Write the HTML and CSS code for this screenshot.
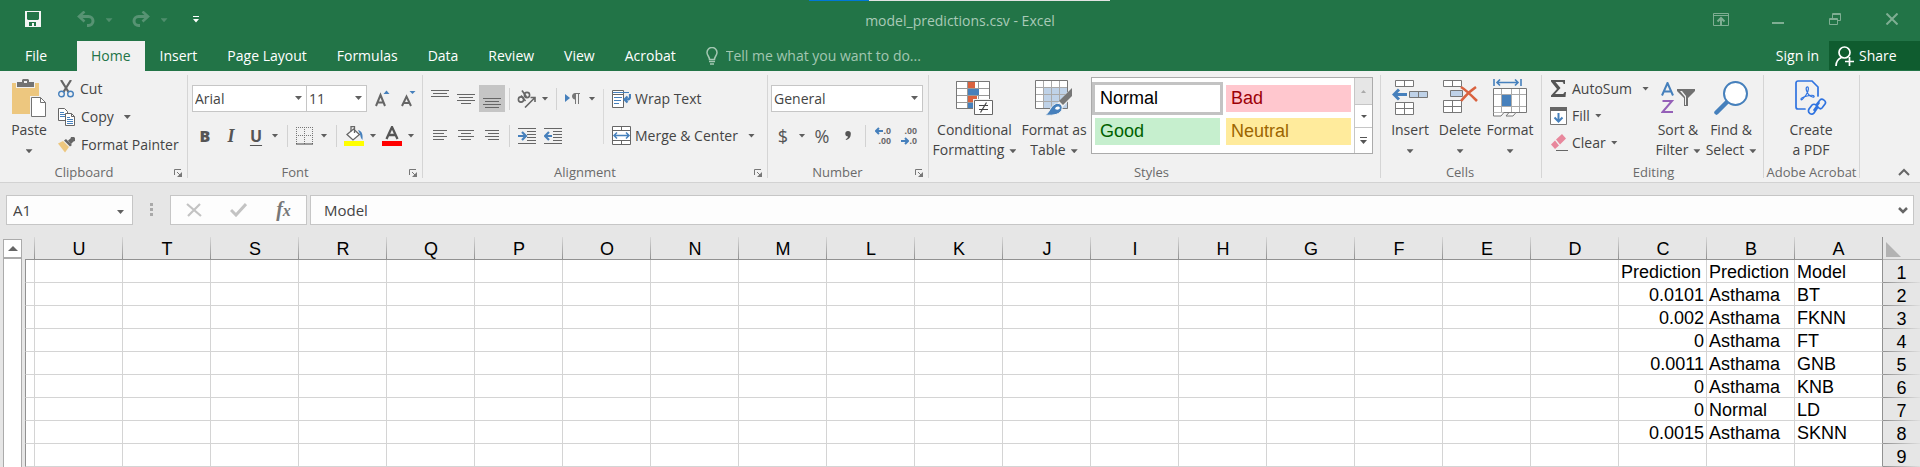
FILE: index.html
```html
<!DOCTYPE html>
<html lang="en">
<head>
<meta charset="utf-8">
<title>model_predictions.csv - Excel</title>
<link rel="stylesheet" href="styles.css">
</head>
<body>
<header class="top">
  <div class="notch"></div>
  <div class="titlebar">
    <div class="quick">
      <button class="quick-btn" aria-label="Save"><svg width="16" height="16" viewBox="0 0 16 16"><path fill="#f5f5f5" fill-rule="evenodd" d="M0 0h16v16H0zM2 1v7l1 1h10l1-1V1zM4 11v4h3v-3h2v3h2v-4z"/></svg></button>
      <button class="quick-btn" aria-label="Undo"><svg class="faded" width="18" height="16" viewBox="0 0 18 16"><path fill="none" stroke="currentColor" stroke-width="3" d="M2 5.500h9.500a4.500 4.500 0 0 1 0 9H10"/><path fill="none" stroke="currentColor" stroke-width="2.600" d="M7.500 0.500 2 5.500l5.500 5"/></svg></button>
      <button class="quick-caret faded" aria-label="Undo list"><i class="caret"></i></button>
      <button class="quick-btn" aria-label="Redo"><svg class="faded" width="18" height="16" viewBox="0 0 18 16"><path fill="none" stroke="currentColor" stroke-width="3" d="M16 5.500H6.500a4.500 4.500 0 0 0 0 9H8"/><path fill="none" stroke="currentColor" stroke-width="2.600" d="M10.500 0.500 16 5.500l-5.500 5"/></svg></button>
      <button class="quick-caret faded" aria-label="Redo list"><i class="caret"></i></button>
      <button class="quick-btn" aria-label="Customize toolbar"><svg width="6" height="7" viewBox="0 0 6 7"><path fill="#fff" d="M0 0h6v1H0zM0 3h6L3 6.500z"/></svg></button>
    </div>
    <h1 class="title">model_predictions.csv - Excel</h1>
    <div class="window-btns">
      <button aria-label="Ribbon display options"><svg width="16" height="13" viewBox="0 0 16 13" fill="none" stroke="currentColor"><path d="M.5.5h15v12H.5zM.5 2.500h15"/><path stroke-width="2" d="M8 12V6M4.500 8.500 8 5l3.500 3.500"/></svg></button>
      <button aria-label="Minimize"><svg width="12" height="14" viewBox="0 0 12 14"><path fill="currentColor" d="M0 10h12v2H0z"/></svg></button>
      <button aria-label="Restore"><svg width="12" height="12" viewBox="0 0 12 12" fill="none" stroke="currentColor"><path d="M.5 5.500h8v6h-8zM.5 6.500h8M3.500 5V.5h8v7H9M3.500 1.500h8"/></svg></button>
      <button aria-label="Close"><svg width="12" height="12" viewBox="0 0 12 12" fill="none" stroke="currentColor" stroke-width="2"><path d="M.5.5l11 11M11.500.5l-11 11"/></svg></button>
    </div>
  </div>
  <nav class="tabs">
    <a class="tab tab-file" href="#">File</a>
    <a class="tab tab-on" href="#" aria-current="page">Home</a>
    <a class="tab" href="#">Insert</a>
    <a class="tab" href="#">Page Layout</a>
    <a class="tab" href="#">Formulas</a>
    <a class="tab" href="#">Data</a>
    <a class="tab" href="#">Review</a>
    <a class="tab" href="#">View</a>
    <a class="tab" href="#">Acrobat</a>
    <label class="tell">
      <svg width="12" height="18" viewBox="0 0 12 18" fill="none" stroke="#a3c7b2"><path stroke-width="1.500" d="M3.500 12.500C3.500 9.500 1 8.500 1 5.500a5 5 0 0 1 10 0c0 3-2.500 4-2.500 7z"/><path stroke-width="1.600" d="M3 14.500h6M4 17h4"/></svg>
      <input type="text" placeholder="Tell me what you want to do..." aria-label="Tell me what you want to do">
    </label>
    <a class="signin" href="#">Sign in</a>
    <button class="share"><svg width="20" height="20" viewBox="0 0 20 20" fill="none" stroke="#fff" stroke-width="1.700"><circle cx="9.500" cy="6.500" r="5.500"/><path d="M1 20c0-4.500 2-7 5.500-8.500M14.500 11v9M10 15.500h9"/></svg>Share</button>
  </nav>
</header>

<main>
<section class="ribbon" aria-label="Home ribbon">
  <div class="group g-clip">
    <div class="body">
      <button class="big">
        <span class="pic"><svg width="35" height="38" viewBox="0 0 35 38"><path fill="#edc77f" d="M0 4h27v31H0z"/><path fill="#f1f1f1" d="M4 3h19v6H4z"/><path fill="#737373" d="M5 3h5V1l1-1h5l1 1v2h5v5H5z"/><path fill="#f1f1f1" d="M12 2h3v2h-3zM18 17h17v21H18z"/><path fill="#fff" stroke="#737373" d="M19.500 18.500h9l5 5v14h-14z"/><path fill="none" stroke="#737373" d="M28.500 18.500v5h5"/></svg></span>
        <span>Paste</span><span><i class="caret"></i></span>
      </button>
      <div class="list list-28">
        <button class="item"><svg width="16" height="18" viewBox="0 0 16 18" fill="none"><path stroke="#666" stroke-width="2.200" d="M3 0l7.500 12M13 0 5.500 12"/><circle cx="3.500" cy="14" r="2.800" stroke="#4680bc" stroke-width="1.400"/><circle cx="12.500" cy="14" r="2.800" stroke="#4680bc" stroke-width="1.400"/></svg>Cut</button>
        <button class="item"><svg width="17" height="18" viewBox="0 0 17 18"><path fill="#fff" stroke="#666" d="M.5.5h6l3 3v9h-9z"/><path stroke="#4680bc" d="M2 4.500h4M2 6.500h5M2 8.500h5"/><path fill="#fff" stroke="#666" d="M7.500 5.500h6l3 3v9h-9z"/><path fill="none" stroke="#666" d="M13.500 5.500v3h3"/><path stroke="#4680bc" d="M9 9.500h3M9 11.500h6M9 13.500h6M9 15.500h6"/></svg>Copy<i class="caret far"></i></button>
        <button class="item"><svg width="17" height="16" viewBox="0 0 17 16"><path fill="#edc77f" d="M0 6.500 5 4l6 6-4 5.500z"/><path fill="#666" d="M6 3.500 8 2l6 6-2 1.500zM10 3.500 12.500 1.500 13 0h3l1 1v3l-1.500.5L13 7z"/></svg>Format Painter</button>
      </div>
    </div>
    <div class="caption"><span>Clipboard</span><button class="launch" aria-label="Clipboard settings"><svg width="8" height="8" viewBox="0 0 8 8"><path fill="none" stroke="#777" d="M.5 6V.5H7M3 3l3 3"/><path fill="#777" d="M8 3v5H3z"/></svg></button></div>
  </div>

  <div class="group g-font">
    <div class="body rows">
      <div class="row">
        <span class="combo c-font"><select aria-label="Font"><option>Arial</option></select><i class="caret"></i></span><span class="combo c-size"><select aria-label="Font size"><option>11</option></select><i class="caret"></i></span>
        <button class="btn indent" aria-label="Increase font size"><svg width="15" height="17" viewBox="0 0 15 17"><path fill="none" stroke="#666" stroke-width="2" d="M1 16 5.500 5 10 16M2.500 12.500h6"/><path fill="#4680bc" d="M8.500 4 11.500.5l3 3.500z"/></svg></button>
        <button class="btn" aria-label="Decrease font size"><svg width="15" height="17" viewBox="0 0 15 17"><path fill="none" stroke="#666" stroke-width="2" d="M1 16 5.500 6.500 10 16M2.500 13h6"/><path fill="#4680bc" d="M8.500 1h6L11.500 4z"/></svg></button>
      </div>
      <div class="row row-font">
        <button class="btn glyph" aria-label="Bold"><b>B</b></button><button class="btn glyph glyph-i" aria-label="Italic"><i>I</i></button><button class="btn duo glyph glyph-u" aria-label="Underline">U</button><button class="drop" aria-label="Underline styles"><i class="caret"></i></button>
        <span class="sep"></span>
        <button class="btn duo" aria-label="Borders"><svg width="18" height="18" viewBox="0 0 18 18"><path fill="none" stroke="#777" stroke-dasharray="1 1" d="M0 .5h17M0 8.500h17M.5 0v17M8.500 0v17M16.500 0v17"/><path stroke="#444" d="M0 17h17"/></svg></button><button class="drop" aria-label="Border styles"><i class="caret"></i></button>
        <span class="sep"></span>
        <button class="btn duo" aria-label="Fill color"><svg width="20" height="20" viewBox="0 0 20 20"><path fill="#fff" stroke="#666" stroke-width="1.300" d="M3 8.500 9.500 3l6 5.500-6.500 5.500z"/><path fill="none" stroke="#666" stroke-width="1.300" d="M7 5.500V.7h3.500V7"/><path fill="#4680bc" d="M14 4c4 1 5 4 4.500 10-2-2-2-4-2.500-6z"/><path fill="#ff0" d="M0 15h20v5H0z"/></svg></button><button class="drop" aria-label="Fill colors"><i class="caret"></i></button><button class="btn duo" aria-label="Font color"><svg width="20" height="20" viewBox="0 0 20 20"><path fill="none" stroke="#555" stroke-width="2.300" d="M4.500 13 10 1l5.500 12M6.500 9h7"/><path fill="red" d="M0 15h20v5H0z"/></svg></button><button class="drop" aria-label="Font colors"><i class="caret"></i></button>
      </div>
    </div>
    <div class="caption"><span>Font</span><button class="launch" aria-label="Font settings"><svg width="8" height="8" viewBox="0 0 8 8"><path fill="none" stroke="#777" d="M.5 6V.5H7M3 3l3 3"/><path fill="#777" d="M8 3v5H3z"/></svg></button></div>
  </div>

  <div class="group g-align">
    <div class="body">
      <div class="rows">
        <div class="row">
          <button class="btn" aria-label="Top align"><svg width="18" height="18" viewBox="0 0 18 18"><path stroke="#666" d="M0 .5h18M2 3.500h14M0 6.500h18"/></svg></button><button class="btn" aria-label="Middle align"><svg width="18" height="18" viewBox="0 0 18 18"><path stroke="#666" d="M0 4.500h18M2 7.500h14M0 10.500h18M4 13.500h10"/></svg></button><button class="btn pressed" aria-label="Bottom align" aria-pressed="true"><svg width="18" height="18" viewBox="0 0 18 18"><path stroke="#666" d="M0 8.500h18M2 11.500h14M0 14.500h18M2 17.500h14"/></svg></button>
          <span class="sep"></span>
          <button class="btn duo" aria-label="Orientation"><svg width="19" height="18" viewBox="0 0 19 18" fill="none" stroke="#666" stroke-width="1.600"><path d="M8 17.500 17.500 8M13.500 7.500H18V12"/><circle cx="4" cy="9.500" r="2.600"/><path d="M4 5.500 8.500 11"/><circle cx="10" cy="5" r="2.600"/><path d="M5 .5 9.500 7"/></svg></button><button class="drop" aria-label="Orientations"><i class="caret"></i></button>
          <span class="sep"></span>
          <button class="btn duo" aria-label="Text direction"><svg width="16" height="12" viewBox="0 0 16 12"><path fill="#4680bc" d="M0 1v8l5-4z"/><path fill="#777" d="M15 0v1h-1v10h-1V1h-2v10h-1V6.500C8.500 6.500 7 5 7 3.200S8.500 0 10 0z"/></svg></button><button class="drop" aria-label="Text directions"><i class="caret"></i></button>
        </div>
        <div class="row">
          <button class="btn" aria-label="Align left"><svg width="14" height="12" viewBox="0 0 14 12"><path stroke="#666" d="M0 .5h14M0 3.500h11M0 6.500h14M0 9.500h11"/></svg></button><button class="btn" aria-label="Center"><svg width="16" height="12" viewBox="0 0 16 12"><path stroke="#666" d="M0 .5h16M3 3.500h10M0 6.500h16M3 9.500h10"/></svg></button><button class="btn" aria-label="Align right"><svg width="14" height="12" viewBox="0 0 14 12"><path stroke="#666" d="M0 .5h14M3 3.500h11M0 6.500h14M3 9.500h11"/></svg></button>
          <span class="sep"></span>
          <button class="btn" aria-label="Increase indent"><svg width="18" height="16" viewBox="0 0 18 16"><path stroke="#666" d="M0 .5h18M9 3.500h9M9 6.500h9M9 9.500h9M9 12.500h9M0 15.500h18"/><path fill="none" stroke="#4680bc" stroke-width="2.200" d="M0 8h7M4 4l4 4-4 4"/></svg></button><button class="btn" aria-label="Decrease indent"><svg width="18" height="16" viewBox="0 0 18 16"><path stroke="#666" d="M0 .5h18M9 3.500h9M9 6.500h9M9 9.500h9M9 12.500h9M0 15.500h18"/><path fill="none" stroke="#4680bc" stroke-width="2.200" d="M8 8H1M5 4 1 8l4 4"/></svg></button>
        </div>
      </div>
      <span class="divider"></span>
      <div class="rows wide">
        <button class="item row"><svg width="19" height="18" viewBox="0 0 19 18"><path fill="#fff" stroke="#666" d="M.5.5h11v4H.5zM.5 4.500h11v13H.5z"/><path stroke="#4680bc" stroke-width="1.200" d="M1 2.500h16M2 7.500h8M2 10.500h7M2 13.500h5"/><path fill="none" stroke="#4680bc" stroke-width="2.200" d="M18 4v3c0 2-1 2.500-3 2.500h-2M15.500 6.500l-3 3 3 3"/></svg>Wrap Text</button>
        <button class="item row"><svg width="19" height="19" viewBox="0 0 19 19"><path fill="#fff" stroke="#666" d="M.5.5h18v18H.5zM.5 4.500h18M.5 14.500h18M9.500 0v4M9.500 15v4"/><path fill="none" stroke="#4680bc" stroke-width="1.500" d="M2.500 9.500h14M5 6.500l-3 3 3 3M14 6.500l3 3-3 3"/></svg>Merge &amp; Center<i class="caret far"></i></button>
      </div>
    </div>
    <div class="caption"><span>Alignment</span><button class="launch" aria-label="Alignment settings"><svg width="8" height="8" viewBox="0 0 8 8"><path fill="none" stroke="#777" d="M.5 6V.5H7M3 3l3 3"/><path fill="#777" d="M8 3v5H3z"/></svg></button></div>
  </div>

  <div class="group g-num">
    <div class="body rows">
      <div class="row"><span class="combo c-num"><select aria-label="Number format"><option>General</option></select><i class="caret"></i></span></div>
      <div class="row">
        <button class="btn duo glyph money" aria-label="Accounting format">$</button><button class="drop" aria-label="Currencies"><i class="caret"></i></button><button class="btn glyph money" aria-label="Percent style">%</button><button class="btn" aria-label="Comma style"><svg width="6" height="9" viewBox="0 0 6 9"><path fill="#555" d="M3 0a2.800 2.800 0 0 1 2.800 3C5.800 6 4 8.500 1 9l-.3-1C2 7.500 3 6.500 3 5.400A2.700 2.700 0 0 1 3 0z"/></svg></button>
        <span class="sep"></span>
        <button class="btn dec" aria-label="Increase decimal"><span><svg width="8" height="8" viewBox="0 0 8 8"><path fill="none" stroke="#4680bc" stroke-width="2" d="M8 4H1M4 1 1 4l3 3"/></svg>.0</span><span>.00</span></button><button class="btn dec" aria-label="Decrease decimal"><span>.00</span><span><svg width="8" height="8" viewBox="0 0 8 8"><path fill="none" stroke="#4680bc" stroke-width="2" d="M0 4h7M4 1l3 3-3 3"/></svg>.0</span></button>
      </div>
    </div>
    <div class="caption"><span>Number</span><button class="launch" aria-label="Number settings"><svg width="8" height="8" viewBox="0 0 8 8"><path fill="none" stroke="#777" d="M.5 6V.5H7M3 3l3 3"/><path fill="#777" d="M8 3v5H3z"/></svg></button></div>
  </div>

  <div class="group g-styles">
    <div class="body">
      <button class="big b-cond">
        <span class="pic"><svg width="38" height="36" viewBox="0 0 38 36"><path fill="#fff" stroke="#999" d="M.5 1.500h33v27H.5zM0 8.500h34M0 15.500h34M0 22.500h34M11.500 1v27M22.500 1v27"/><path fill="none" stroke="#777" d="M.5 1.500h33v27H.5z"/><path fill="#d9623f" d="M12 2h7v6h-7zM12 16h9v6h-9z"/><path fill="#4680bc" d="M12 9h11v6H12zM12 23h5v5h-5z"/><path fill="#f1f1f1" d="M17 19h21v17H17z"/><path fill="#fff" stroke="#666" d="M18.500 20.500h18v14h-18z"/><path fill="none" stroke="#444" stroke-width="1.200" d="M23 25.500h9M23 29.500h9M30.500 22.500l-6 10"/></svg></span>
        <span>Conditional</span><span>Formatting<i class="caret near"></i></span>
      </button>
      <button class="big b-table">
        <span class="pic"><svg width="38" height="36" viewBox="0 0 38 36"><path fill="#fff" d="M.5.5h32v28H.5z"/><path fill="#bfd2e8" d="M9 8h24v21H9z"/><path fill="none" stroke="#aaa" d="M0 7.500h33M0 14.500h33M0 21.500h33M8.500 0v28M16.500 0v28M24.500 0v28"/><path fill="none" stroke="#777" d="M.5.5h32v28H.5z"/><path fill="#f1f1f1" d="M38 6 22 24l4 5 12-13z"/><path fill="#777" d="M37 8v8l-9 9-4-4z"/><path fill="#4680bc" stroke="#f1f1f1" d="M20 24c4-2 8 1 7 5-1 5-8 7-17 6 5-2 5-9 10-11z"/><path fill="#fff" d="M20 29c1-3 4-3 5-1-1 2-3 2-5 1z"/></svg></span>
        <span>Format as</span><span>Table<i class="caret near"></i></span>
      </button>
      <div class="gallery">
        <div class="tiles">
          <button class="tile t-normal">Normal</button><button class="tile t-bad">Bad</button><button class="tile t-good">Good</button><button class="tile t-neutral">Neutral</button>
        </div>
        <div class="scroller">
          <button class="off" aria-label="Scroll up" disabled><svg width="5" height="3" viewBox="0 0 5 3"><path fill="#aaa" d="M0 3 2.500 0 5 3z"/></svg></button>
          <button aria-label="Scroll down"><svg width="6" height="3" viewBox="0 0 6 3"><path fill="#555" d="M0 0h6L3 3z"/></svg></button>
          <button aria-label="More styles"><svg width="7" height="7" viewBox="0 0 7 7"><path fill="#555" d="M0 0h7v1H0zM0 3h7L3.500 7z"/></svg></button>
        </div>
      </div>
    </div>
    <div class="caption"><span>Styles</span></div>
  </div>

  <div class="group g-cells">
    <div class="body">
      <button class="big b-50">
        <span class="pic"><svg width="36" height="36" viewBox="0 0 36 36"><path fill="#fff" stroke="#777" d="M3.500.5h18v6h-18zM12.500.5v6M3.500 22.500h18v12h-18zM12.500 22.500v12M3.500 28.500h18"/><path fill="#bfd2e8" stroke="#777" d="M17.500 11.500h18v6h-18zM26.500 11.500v6"/><path fill="none" stroke="#4680bc" stroke-width="3" d="M15 14.500H2M7 9.500l-5 5 5 5"/></svg></span>
        <span>Insert</span><span><i class="caret"></i></span>
      </button>
      <button class="big b-50">
        <span class="pic"><svg width="36" height="36" viewBox="0 0 36 36"><path fill="#fff" stroke="#777" d="M1.500.5h18v6h-18zM10.500.5v6M1.500 20.500h18v12h-18zM10.500 20.500v12M1.500 26.500h18"/><path fill="#bfd2e8" stroke="#777" d="M8.500 10.500h12v6h-12z"/><path fill="none" stroke="#d9623f" stroke-width="2.600" d="M19 7c5 3 10 8 16 14M34 7c-6 4-11 9-15 14"/></svg></span>
        <span>Delete</span><span><i class="caret"></i></span>
      </button>
      <button class="big b-50">
        <span class="pic"><svg width="34" height="38" viewBox="0 0 34 38"><path fill="#fff" stroke="#777" d="M.5 9.500h33v24H.5z"/><path fill="none" stroke="#aaa" d="M1 15.500h32M1 27.500h32M8.500 10v23M18.500 10v23M26.500 10v23"/><path fill="#4680bc" d="M9 16h9v11H9z"/><path fill="#fff" stroke="#777" d="M.5 33.500V37H8l3-3.500M13 37h7l3-3.500M13 37l3-3.500"/><path fill="none" stroke="#4680bc" stroke-width="1.600" d="M1 0v7M28 0v7M4 3.500h21M7 .5l-3 3 3 3M22 .5l3 3-3 3"/></svg></span>
        <span>Format</span><span><i class="caret"></i></span>
      </button>
    </div>
    <div class="caption"><span>Cells</span></div>
  </div>

  <div class="group g-edit">
    <div class="body">
      <div class="list list-27">
        <button class="item tight"><svg width="18" height="17" viewBox="0 0 18 17"><path fill="#555" d="M1 0h14v4h-1.500c0-1.500-.5-2-2-2H5.500l5 6-5.500 6h7c1.500 0 2-.5 2.500-2H16l-.5 5H1v-1.500l6-6.500L1 1.500z"/></svg>AutoSum<i class="caret far"></i></button>
        <button class="item tight"><svg width="18" height="18" viewBox="0 0 18 18"><path fill="#fff" stroke="#777" d="M.5.5h16v17H.5z"/><path fill="#666" d="M0 0h17v4H0z"/><path fill="none" stroke="#4680bc" stroke-width="2" d="M8.500 6v9M4.500 10.500l4 4 4-4"/></svg>Fill<i class="caret near"></i></button>
        <button class="item tight"><svg width="18" height="18" viewBox="0 0 18 18"><path fill="#e8879c" d="M6 5.500 12 0l4 4.500-6 6zM5 6.500l4 5L5 15 1 10.500z"/><path stroke="#666" d="M6 16.500h12"/></svg>Clear<i class="caret near"></i></button>
      </div>
      <button class="big b-50">
        <span class="pic"><svg width="34" height="32" viewBox="0 0 34 32" fill="none"><path stroke="#4680bc" stroke-width="2" d="M1 13.500 6.500 1 12 13.500M3 9.500h7"/><path stroke="#9560b8" stroke-width="2" d="M1.500 19h9.500L1.500 30H12"/><path fill="#707070" d="M16 7h18v2l-7 7v8h-4v-8l-7-7z"/><path fill="#f1f1f1" d="M19 9h2l4 5v9h-1v-8z"/></svg></span>
        <span>Sort &amp;</span><span>Filter<i class="caret near"></i></span>
      </button>
      <button class="big b-find">
        <span class="pic"><svg width="34" height="34" viewBox="0 0 34 34"><path stroke="#4680bc" stroke-width="4.500" stroke-linecap="round" d="M2.500 31.500 13 21"/><circle cx="21.500" cy="12.500" r="11.500" fill="#fff" stroke="#4680bc" stroke-width="2"/></svg></span>
        <span>Find &amp;</span><span>Select<i class="caret near"></i></span>
      </button>
    </div>
    <div class="caption"><span>Editing</span></div>
  </div>

  <div class="group g-pdf">
    <div class="body">
      <button class="big b-pdf">
        <span class="pic"><svg width="32" height="36" viewBox="0 0 32 36" fill="none" stroke="#2f73e0" stroke-width="1.700" stroke-linecap="round"><path d="M10 29H3a2 2 0 0 1-2-2V3a2 2 0 0 1 2-2h14l6 6v9"/><path stroke-width="1.200" d="M6 19c0-2 12-5 13-3s-3 1-5-1-4-7-2-8 2 4-1 8-5 6-5 4z"/><path d="M21 25l4-5c2-2 7 1 5 4l-3 4c-1 1-2 1-3 0M23 27l-4 6c-2 3-7 0-5-4l3-4c1-1 3-1 4 0M19 30l5-7"/></svg></span>
        <span>Create</span><span>a PDF</span>
      </button>
    </div>
    <div class="caption"><span>Adobe Acrobat</span></div>
  </div>
  <button class="collapse" aria-label="Collapse the ribbon"><svg width="12" height="8" viewBox="0 0 12 8"><path fill="none" stroke="#666" stroke-width="2" d="M1 7l5-5 5 5"/></svg></button>
</section>

<section class="formula" aria-label="Formula bar">
  <div class="namebox"><input type="text" value="A1" aria-label="Name box"><button aria-label="Names"><i class="caret"></i></button></div>
  <span class="dots"></span>
  <div class="fx">
    <button aria-label="Cancel"><svg width="16" height="14" viewBox="0 0 16 14"><path stroke="#c3c3c3" stroke-width="2.200" d="M1 1l14 12M14 1 2 13"/></svg></button>
    <button aria-label="Enter"><svg width="17" height="14" viewBox="0 0 17 14"><path fill="none" stroke="#c3c3c3" stroke-width="3" d="M1 7l5 5L16 1"/></svg></button>
    <button class="fn" aria-label="Insert function">f<small>x</small></button>
  </div>
  <div class="content"><input type="text" value="Model" aria-label="Formula"><button aria-label="Expand formula bar"><svg width="10" height="7" viewBox="0 0 10 7"><path fill="none" stroke="#666" stroke-width="2.500" d="M1 1l4 4 4-4"/></svg></button></div>
</section>

<section class="sheet">
  <div class="scrollbar"><button aria-label="Scroll up"><svg width="10" height="5" viewBox="0 0 10 5"><path fill="#666" d="M0 5 5 0l5 5z"/></svg></button><div class="thumb"></div></div>
  <div class="cells"><table id="grid"></table></div>
</section>
</main>
<script src="app.js"></script>
</body>
</html>
```

FILE: styles.css
```css
* { box-sizing: border-box; }
body {
  margin: 0;
  background: #e6e6e6;
  color: #444;
  font: 14px/20px "Open Sans", "Noto Sans", sans-serif;
  overflow: hidden;
}
button, input, select { font: inherit; color: inherit; }
button { border: 0; padding: 0; background: none; white-space: nowrap; }
input, select { border: 0; outline: 0; background: none; padding: 0; min-width: 0; }
a { color: inherit; text-decoration: none; }
svg { display: block; flex: none; }

.caret {
  display: inline-block;
  flex: none;
  width: 7px;
  height: 4px;
  background: currentColor;
  clip-path: polygon(0 0, 100% 0, 50% 100%);
  vertical-align: middle;
  opacity: .85;
}
.caret.near { margin-left: 5px; }
.caret.far { margin-left: 4px; }

/* Title bar and tabs */
.top { position: relative; background: #227447; color: #fff; }
.notch {
  position: absolute;
  top: 0;
  left: 809px;
  width: 301px;
  height: 1px;
  background: linear-gradient(to right, #0078d7 60px, #e3e3e3 60px);
}
.titlebar { display: grid; grid-template-columns: 1fr auto 1fr; height: 41px; }
.quick { display: flex; align-items: center; padding: 0 0 3px 19px; }
.quick-btn { display: grid; place-items: center; width: 28px; height: 30px; }
.quick-caret { width: 18px; height: 30px; line-height: 20px; }
.quick-btn + .quick-btn { margin-left: 25px; }
.quick-caret + .quick-btn { margin-left: 9px; }
.faded { color: #579373; }
.title { margin: 0; font-size: 14px; font-weight: 400; line-height: 41px; color: #a9cab7; }
.window-btns { display: flex; justify-content: flex-end; padding-bottom: 3px; color: #7fae93; }
.window-btns button { display: grid; place-items: center; width: 57px; }
.tabs { display: flex; align-items: stretch; height: 30px; line-height: 30px; }
.tab { padding: 0 15px; }
.tab-file { width: 77px; padding: 0 0 0 25px; }
.tab-on { padding: 0 14px; background: #f1f1f1; color: #227447; }
.tell { display: flex; align-items: center; gap: 8px; flex: 1; margin-left: 15px; }
.tell input { width: 240px; }
.tell input::placeholder { color: #a3c7b2; opacity: 1; }
.share {
  display: flex;
  align-items: center;
  gap: 4px;
  width: 91px;
  height: 29px;
  margin-left: 10px;
  padding-left: 6px;
  background: #0f5c2f;
}

/* Ribbon */
.ribbon {
  display: flex;
  padding: 4px 0;
  background: #f1f1f1;
  border-bottom: 1px solid #d2d2d2;
}
.group {
  display: flex;
  flex-direction: column;
  flex: none;
  height: 103px;
  border-right: 1px solid #d5d5d5;
}
.g-clip { width: 188px; padding-left: 5px; }
.g-font { width: 235px; padding-left: 4px; }
.g-align { width: 345px; padding-left: 4px; }
.g-num { width: 161px; padding-left: 3px; }
.g-styles { width: 452px; }
.g-cells { width: 161px; padding-left: 4px; }
.g-edit { width: 222px; padding-left: 8px; }
.g-pdf { width: 96px; }
.body { display: flex; flex: 1; }
.caption {
  position: relative;
  height: 16px;
  padding-right: 24px;
  color: #6a6a6a;
  font-size: 13px;
  line-height: 20px;
  text-align: center;
  white-space: nowrap;
}
.g-styles .caption, .g-cells .caption, .g-edit .caption { padding-right: 6px; }
.g-pdf .caption { padding-right: 0; }
.launch { position: absolute; right: 5px; top: 7px; }

.rows { display: flex; flex-direction: column; gap: 10px; padding-top: 10px; }
.row { display: flex; align-items: center; height: 27px; }
.btn, .drop { display: flex; align-items: center; justify-content: center; height: 27px; width: 26px; }
.btn.duo { width: 24px; }
.drop { width: 14px; }
.indent { margin-left: 2px; }
.pressed { background: #c5c5c5; }
.sep { flex: none; width: 1px; height: 22px; margin: 0 4px; background: #d2d2d2; }
.row-font .sep { margin: 0 5px; }
.divider { width: 1px; height: 55px; margin: 14px 8px 0 4px; background: #d9d9d9; }
.glyph { font-size: 16px; font-weight: 700; color: #555; }
.glyph-i { font-family: "Liberation Serif", serif; font-size: 18px; }
.glyph-u { text-decoration: underline; text-underline-offset: 3px; }
.money { font-size: 18px; font-weight: 400; }
.dec {
  flex-direction: column;
  align-items: flex-end;
  justify-content: center;
  padding-right: 5px;
  font: 700 9px/10px "Liberation Sans", sans-serif;
  color: #666;
}
.dec span { display: flex; align-items: center; }

.combo { position: relative; display: block; height: 27px; background: #fff; border: 1px solid #c6c6c6; }
.combo select { appearance: none; width: 100%; height: 25px; padding-left: 2px; }
.combo .caret { position: absolute; right: 4px; top: 10px; pointer-events: none; }
.c-font { width: 115px; }
.c-size { width: 60px; border-left: 0; }
.c-num { width: 152px; }

.list { display: flex; flex-direction: column; }
.list-28 { margin-left: 5px; }
.list-27 { width: 103px; }
.list-28 .item { height: 28px; }
.list-27 .item { height: 27px; }
.item { display: flex; align-items: center; gap: 6px; }
.item svg { min-width: 16px; }
.tight, .row.item { gap: 4px; }
.tight .near { margin-left: 1px; }
.tight .far, .row .far { margin-left: 6px; }

.big { display: flex; flex-direction: column; align-items: center; width: 48px; height: 86px; padding-top: 4px; }
.pic { display: grid; place-items: center; height: 38px; margin-bottom: 3px; }
.big > span { line-height: 20px; }
.b-cond { width: 91px; }
.b-table { width: 68px; }
.b-50 { width: 50px; }
.b-find { width: 56px; }
.b-pdf { width: 94px; }

.gallery {
  display: flex;
  width: 282px;
  height: 77px;
  margin: 2px 0 0 3px;
  background: #fff;
  border: 1px solid #ababab;
}
.tiles { flex: 1; display: grid; grid-template: 27px 27px / 125px 125px; gap: 6px; padding: 7px 3px; }
.tile { padding-left: 5px; font: 18px/25px "Liberation Sans", sans-serif; text-align: left; }
.t-normal { color: #000; background: #fff; box-shadow: 0 0 0 3px #c3c3c3; }
.t-bad { color: #9c0006; background: #ffc7ce; }
.t-good { color: #006100; background: #c6efce; }
.t-neutral { color: #9c6500; background: #ffeb9c; }
.scroller { display: grid; grid-template-rows: 26px 23px 1fr; width: 18px; border-left: 1px solid #c6c6c6; }
.scroller button { display: grid; place-items: center; }
.scroller button + button { border-top: 1px solid #c6c6c6; }
.scroller .off { background: #e6e6e6; }
.collapse { align-self: flex-end; margin: 0 10px 2px auto; }

/* Formula bar */
.formula { display: flex; padding: 12px 6px; height: 54px; font-size: 15px; }
.namebox, .fx, .content { display: flex; align-items: center; height: 30px; background: #fdfdfd; border: 1px solid #c6c6c6; }
.namebox { width: 127px; padding: 0 8px 0 6px; }
.namebox input, .content input { flex: 1; }
.dots {
  width: 3px;
  height: 13px;
  margin: 8px 17px;
  background: repeating-linear-gradient(#a9a9a9 0 3px, transparent 3px 5px);
}
.fx { width: 137px; margin-right: 3px; justify-content: space-around; }
.fx button { display: flex; justify-content: center; align-items: baseline; width: 40px; }
.fx .fn { font: italic 700 20px/24px "Liberation Serif", serif; color: #777; }
.fn small { font-size: 16px; }
.content { flex: 1; padding: 0 5px 0 13px; }

/* Worksheet */
.sheet { display: flex; gap: 3px; padding-left: 3px; }
.scrollbar { display: flex; flex-direction: column; flex: none; width: 19px; padding-top: 2px; }
.scrollbar button { display: grid; place-items: center; height: 19px; background: #fff; border: 1px solid #ababab; }
.thumb { flex: 1; background: #fff; border: 1px solid #ababab; border-bottom: 0; }
.cells { flex: 1; min-width: 0; }
table {
  width: 100%;
  table-layout: fixed;
  border-spacing: 0;
  color: #000;
  font: 18px/20px "Liberation Sans", sans-serif;
}
th, td { height: 23px; padding: 2px 2px 0; font-weight: 400; white-space: nowrap; }
td { background: #fff; border-right: 1px solid #d4d4d4; border-bottom: 1px solid #d4d4d4; text-align: left; }
td.num { text-align: right; }
td.edge { border-left: 1px solid #919191; }
td.last, th.last { border-right: 1px solid #919191; }
thead th {
  border-bottom: 1px solid #919191;
  background: linear-gradient(#d8d8d8, #919191) right / 1px 100% no-repeat;
}
thead th.last { background: none; }
thead th.corner { background: none; border-bottom-color: #b5b5b5; padding-left: 3px; }
tbody th { background: linear-gradient(to right, #919191, #dedede) bottom / 100% 1px no-repeat; }
.w-edge { width: 10px; }
.w-head { width: 37px; }
```

FILE: app.js
```javascript
const columns = "UTSRQPONMLKJIHGFEDCBA".split("");
const data = {
  1: { C: "Prediction", B: "Prediction", A: "Model" },
  2: { C: 0.0101, B: "Asthama", A: "BT" },
  3: { C: 0.002, B: "Asthama", A: "FKNN" },
  4: { C: 0, B: "Asthama", A: "FT" },
  5: { C: 0.0011, B: "Asthama", A: "GNB" },
  6: { C: 0, B: "Asthama", A: "KNB" },
  7: { C: 0, B: "Normal", A: "LD" },
  8: { C: 0.0015, B: "Asthama", A: "SKNN" }
};

const last = (name) => (name === "A" ? " last" : "");

let html = '<colgroup><col class="w-edge">' + "<col>".repeat(columns.length) + '<col class="w-head"></colgroup>';
html += "<thead><tr><th></th>";
for (const name of columns) html += `<th scope="col" class="${last(name)}">${name}</th>`;
html += '<th class="corner"><svg width="15" height="15" viewBox="0 0 15 15"><path fill="#b3b3b3" d="M0 0v15h15z"/></svg></th></tr></thead><tbody>';
for (let row = 1; row <= 9; row++) {
  html += '<tr><td class="edge"></td>';
  for (const name of columns) {
    const value = (data[row] || {})[name];
    const kind = typeof value === "number" ? "num" : "";
    html += `<td class="${kind}${last(name)}">${value ?? ""}</td>`;
  }
  html += `<th scope="row">${row}</th></tr>`;
}
document.getElementById("grid").innerHTML = html + "</tbody>";
```
